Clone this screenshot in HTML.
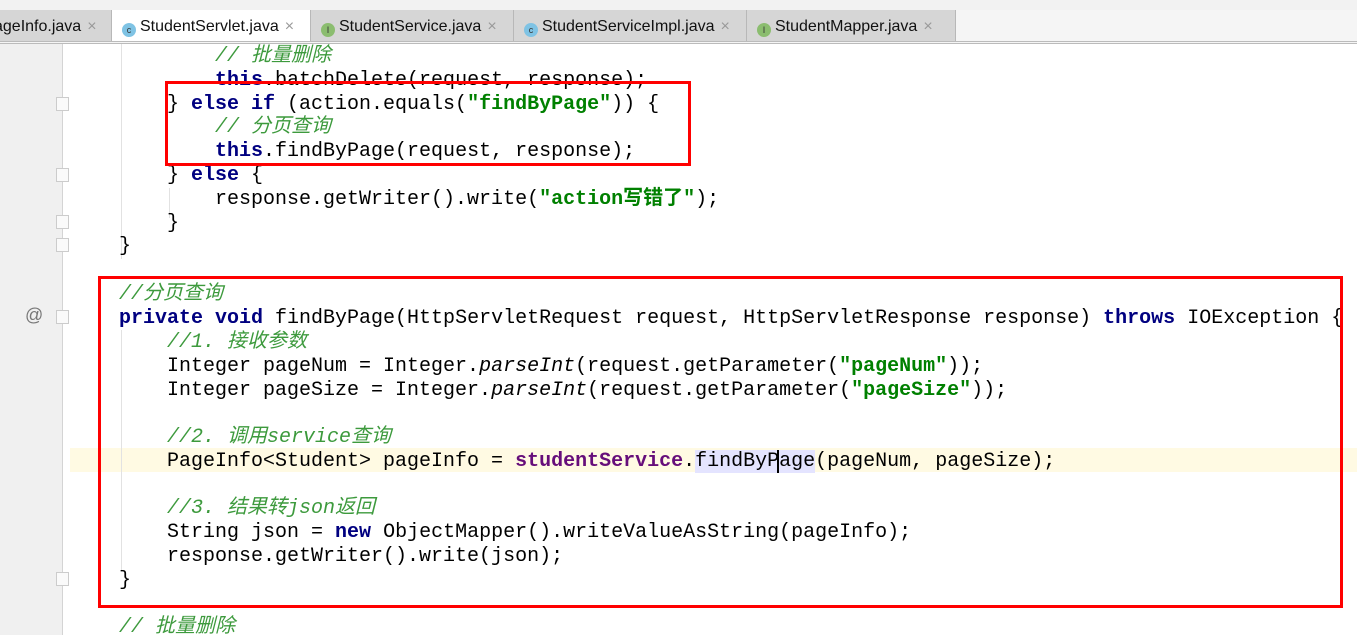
<!DOCTYPE html>
<html><head><meta charset="utf-8"><style>
body{margin:0;width:1357px;height:635px;overflow:hidden;background:#fff;position:relative;font-family:"Liberation Sans","Noto Sans CJK SC",sans-serif}
.crumb{position:absolute;left:0;top:0;width:1357px;height:10px;background:#f2f2f2;border-bottom:1px solid #bbb}
.tabs{position:absolute;left:0;top:10px;width:1357px;height:31px;background:#f5f5f5;border-bottom:3px double #bbb}
.tab{position:absolute;top:0;height:31px;background:#d6d6d6;border-right:1px solid #b8b8b8;font-size:16px;line-height:33px;color:#111;white-space:nowrap;overflow:hidden}
.tab.act{background:#fff}
.ic{display:inline-block;width:14px;height:14px;border-radius:50%;vertical-align:-2px;font-size:9px;line-height:14px;text-align:center;margin:0 4px 0 10px;color:#333}
.c{background:#7fc3e4}.i{background:#8bbd6f}
.x{color:#999;margin-left:6px}
.gut{position:absolute;left:0;top:44px;width:62px;height:591px;background:#f0f0f0;border-right:1px solid #d4d4d4}
.hl{position:absolute;left:70px;top:448px;width:1287px;height:24px;background:#fffae3}
.ln{position:absolute;left:119px;height:24px;line-height:24px;font-family:"Liberation Mono","Noto Sans CJK SC",monospace;font-size:20px;white-space:pre;color:#000}
.k{color:#000080;font-weight:bold}.s{color:#008000;font-weight:bold}.cm{color:#3d9a3d;font-style:italic}.f{color:#660e7a;font-weight:bold}.it{font-style:italic}
.box{position:absolute;border:3px solid #f00}
.fold{position:absolute;left:56px;width:11px;height:12px;border:1px solid #ccc;background:#fafafa}
.guide{position:absolute;width:1px;background:#e2e2e2}
.code{position:absolute;left:0;top:2px;width:1357px;height:635px}
</style></head><body>
<div class="crumb"></div>
<div class="tabs">
<div class="tab" style="left:-6px;width:117px">ageInfo.java<span class="x">×</span></div>
<div class="tab act" style="left:112px;width:198px"><span class="ic c">c</span>StudentServlet.java<span class="x">×</span></div>
<div class="tab" style="left:311px;width:202px"><span class="ic i">I</span>StudentService.java<span class="x">×</span></div>
<div class="tab" style="left:514px;width:232px"><span class="ic c">c</span>StudentServiceImpl.java<span class="x">×</span></div>
<div class="tab" style="left:747px;width:208px"><span class="ic i">I</span>StudentMapper.java<span class="x">×</span></div>
</div>
<div class="gut"></div>
<div class="hl"></div>
<div class="guide" style="left:121px;top:44px;height:215px"></div>
<div class="guide" style="left:121px;top:330px;height:240px"></div>
<div class="guide" style="left:169px;top:188px;height:30px"></div>
<div class="fold" style="top:97px"></div>
<div class="fold" style="top:168px"></div>
<div class="fold" style="top:215px"></div>
<div class="fold" style="top:238px"></div>
<div class="fold" style="top:310px"></div>
<div class="fold" style="top:572px"></div>
<div style="position:absolute;left:25px;top:305px;font-size:18px;color:#777">@</div>
<div class="code">
<div class="ln" style="top:43px">        <span class="cm">// 批量删除</span></div>
<div class="ln" style="top:67px">        <span class="k">this</span>.batchDelete(request, response);</div>
<div class="ln" style="top:91px">    } <span class="k">else if</span> (action.equals(<span class="s">"findByPage"</span>)) {</div>
<div class="ln" style="top:114px">        <span class="cm">// 分页查询</span></div>
<div class="ln" style="top:138px">        <span class="k">this</span>.findByPage(request, response);</div>
<div class="ln" style="top:162px">    } <span class="k">else</span> {</div>
<div class="ln" style="top:186px">        response.getWriter().write(<span class="s">"action写错了"</span>);</div>
<div class="ln" style="top:210px">    }</div>
<div class="ln" style="top:233px">}</div>
<div class="ln" style="top:281px"><span class="cm">//分页查询</span></div>
<div class="ln" style="top:305px"><span class="k">private void</span> findByPage(HttpServletRequest request, HttpServletResponse response) <span class="k">throws</span> IOException {</div>
<div class="ln" style="top:329px">    <span class="cm">//1. 接收参数</span></div>
<div class="ln" style="top:353px">    Integer pageNum = Integer.<span class="it">parseInt</span>(request.getParameter(<span class="s">"pageNum"</span>));</div>
<div class="ln" style="top:377px">    Integer pageSize = Integer.<span class="it">parseInt</span>(request.getParameter(<span class="s">"pageSize"</span>));</div>
<div class="ln" style="top:424px">    <span class="cm">//2. 调用service查询</span></div>
<div class="ln" style="top:448px">    PageInfo&lt;Student&gt; pageInfo = <span class="f">studentService</span>.<span style="background:#e4e4ff">findByP<span style="border-left:2px solid #000;margin-left:-2px">a</span>ge</span>(pageNum, pageSize);</div>
<div class="ln" style="top:495px">    <span class="cm">//3. 结果转json返回</span></div>
<div class="ln" style="top:519px">    String json = <span class="k">new</span> ObjectMapper().writeValueAsString(pageInfo);</div>
<div class="ln" style="top:543px">    response.getWriter().write(json);</div>
<div class="ln" style="top:567px">}</div>
<div class="ln" style="top:614px"><span class="cm">// 批量删除</span></div>
</div>
<div class="box" style="left:165px;top:81px;width:520px;height:79px"></div>
<div class="box" style="left:98px;top:276px;width:1239px;height:326px"></div>
</body></html>
